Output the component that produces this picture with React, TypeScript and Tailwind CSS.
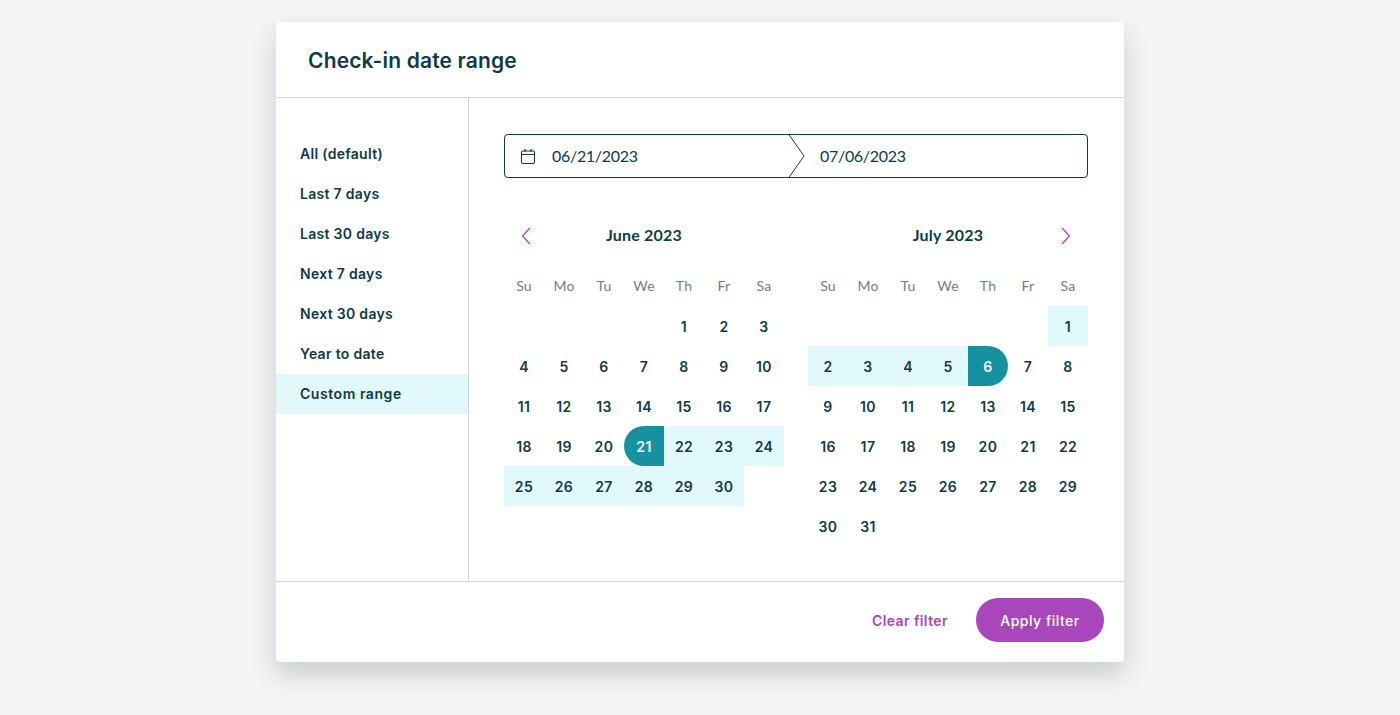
const presets = ["All (default)", "Last 7 days", "Last 30 days", "Next 7 days", "Next 30 days", "Year to date", "Custom range"];
const weekdays = ["Su", "Mo", "Tu", "We", "Th", "Fr", "Sa"];

type MonthProps = {
  title: string;
  offset: number;
  days: number;
  rangeFrom?: number;
  rangeTo?: number;
  start?: number;
  end?: number;
  nav: "prev" | "next";
};

function Chevron({ dir }: { dir: "prev" | "next" }) {
  return (
    <svg width="10" height="18" viewBox="0 0 10 18" fill="none" stroke="#a846bb" strokeWidth="1.3">
      <path d={dir === "prev" ? "M9 1 1.5 9 9 17" : "M1 1 8.5 9 1 17"} />
    </svg>
  );
}

function Month({ title, offset, days, rangeFrom, rangeTo, start, end, nav }: MonthProps) {
  const cells: (number | null)[] = Array(offset).fill(null);
  for (let d = 1; d <= days; d++) cells.push(d);

  return (
    <div className="w-[280px]">
      <div className={`flex h-10 items-center px-[17px] ${nav === "next" ? "flex-row-reverse" : ""}`}>
        <Chevron dir={nav} />
        <div className="flex-1 pb-0.5 text-center font-['Lato'] text-[16px] font-bold tracking-[0.2px] text-[#0f3a47]">
          {title}
        </div>
        <div className="w-[10px]" />
      </div>
      <div className="mt-[10px] grid grid-cols-7 text-center font-['Lato'] text-[14px] leading-10 tracking-[0.2px] text-[#767c80]">
        {weekdays.map((w) => (
          <div key={w}>{w}</div>
        ))}
      </div>
      <div className="grid grid-cols-7 font-['Inter'] text-[14px] font-semibold tracking-[0.4px] text-[#0f3a47]">
        {cells.map((d, i) => {
          if (d === null) return <div key={i} className="h-10" />;
          const inRange = rangeFrom !== undefined && rangeTo !== undefined && d >= rangeFrom && d <= rangeTo;
          let cls = "";
          if (d === start) cls = "rounded-l-[20px] bg-[#16919f] text-white";
          else if (d === end) cls = "rounded-r-[20px] bg-[#16919f] text-white";
          else if (inRange) cls = "bg-[#e2f9fc]";
          return (
            <div key={i} className={`flex h-10 items-center justify-center ${cls}`}>
              {d}
            </div>
          );
        })}
      </div>
    </div>
  );
}

export default function App() {
  return (
    <div className="flex h-[715px] justify-center bg-[#f5f3f4] pt-[22px]">
      <div className="h-[640px] w-[848px] rounded-[4px] bg-white shadow-[0_12px_24px_rgba(15,58,71,0.2)]">
        {/* header */}
        <div className="flex h-[76px] items-center border-b border-[#d8d4c8] pl-8 pt-0.5 font-['Inter'] text-[21px] font-semibold tracking-[0.16px] text-[#0f3a47]">
          Check-in date range
        </div>

        <div className="flex h-[483px]">
          {/* presets */}
          <div className="w-[193px] border-r border-[#d8d4c8] pt-9">
            {presets.map((p) => (
              <div
                key={p}
                className={`flex h-10 items-center pb-0.5 pl-6 font-['Inter'] text-[14px] font-semibold tracking-[0.3px] text-[#0f3a47] ${p === "Custom range" ? "bg-[#e2f9fc] tracking-[0.55px]" : ""}`}
              >
                {p}
              </div>
            ))}
          </div>

          {/* calendars */}
          <div className="pl-[35px] pt-9">
            <div className="relative flex h-11 w-[584px] items-center rounded-[4px] border border-[#0f3a47] font-['Lato'] text-[16px] tracking-[-0.3px] text-[#0f3a47]">
              <div className="flex w-[284px] items-center pl-[15px]">
                <svg width="16" height="17" viewBox="0 0 16 17" fill="none" stroke="#0f3a47" strokeWidth="1.1">
                  <rect x="1.5" y="3" width="13" height="12.5" rx="1.5" />
                  <path d="M1.5 6.5h13M5 1v3M11 1v3" />
                </svg>
                <span className="mb-px ml-[16px]">06/21/2023</span>
              </div>
              <span className="mb-px pl-[31px]">07/06/2023</span>
              <svg className="absolute left-[283px] top-[-1px]" width="17" height="44" viewBox="0 0 17 44" fill="none" stroke="#0f3a47" strokeWidth="1">
                <path d="M0.5 0 16 22 0.5 44" />
              </svg>
            </div>

            <div className="mt-[38px] flex gap-6">
              <Month title="June 2023" offset={4} days={30} rangeFrom={21} rangeTo={30} start={21} nav="prev" />
              <Month title="July 2023" offset={6} days={31} rangeFrom={1} rangeTo={6} end={6} nav="next" />
            </div>
          </div>
        </div>

        {/* footer */}
        <div className="flex h-[81px] items-start justify-end gap-7 border-t border-[#d8d4c8] pr-5 pt-4 font-['Inter'] text-[14px]">
          <button className="flex h-11 items-center font-semibold tracking-[0.4px] text-[#a846bb]">Clear filter</button>
          <button className="h-11 w-32 rounded-full bg-[#a846bb] font-medium tracking-[0.5px] text-white">Apply filter</button>
        </div>
      </div>
    </div>
  );
}
